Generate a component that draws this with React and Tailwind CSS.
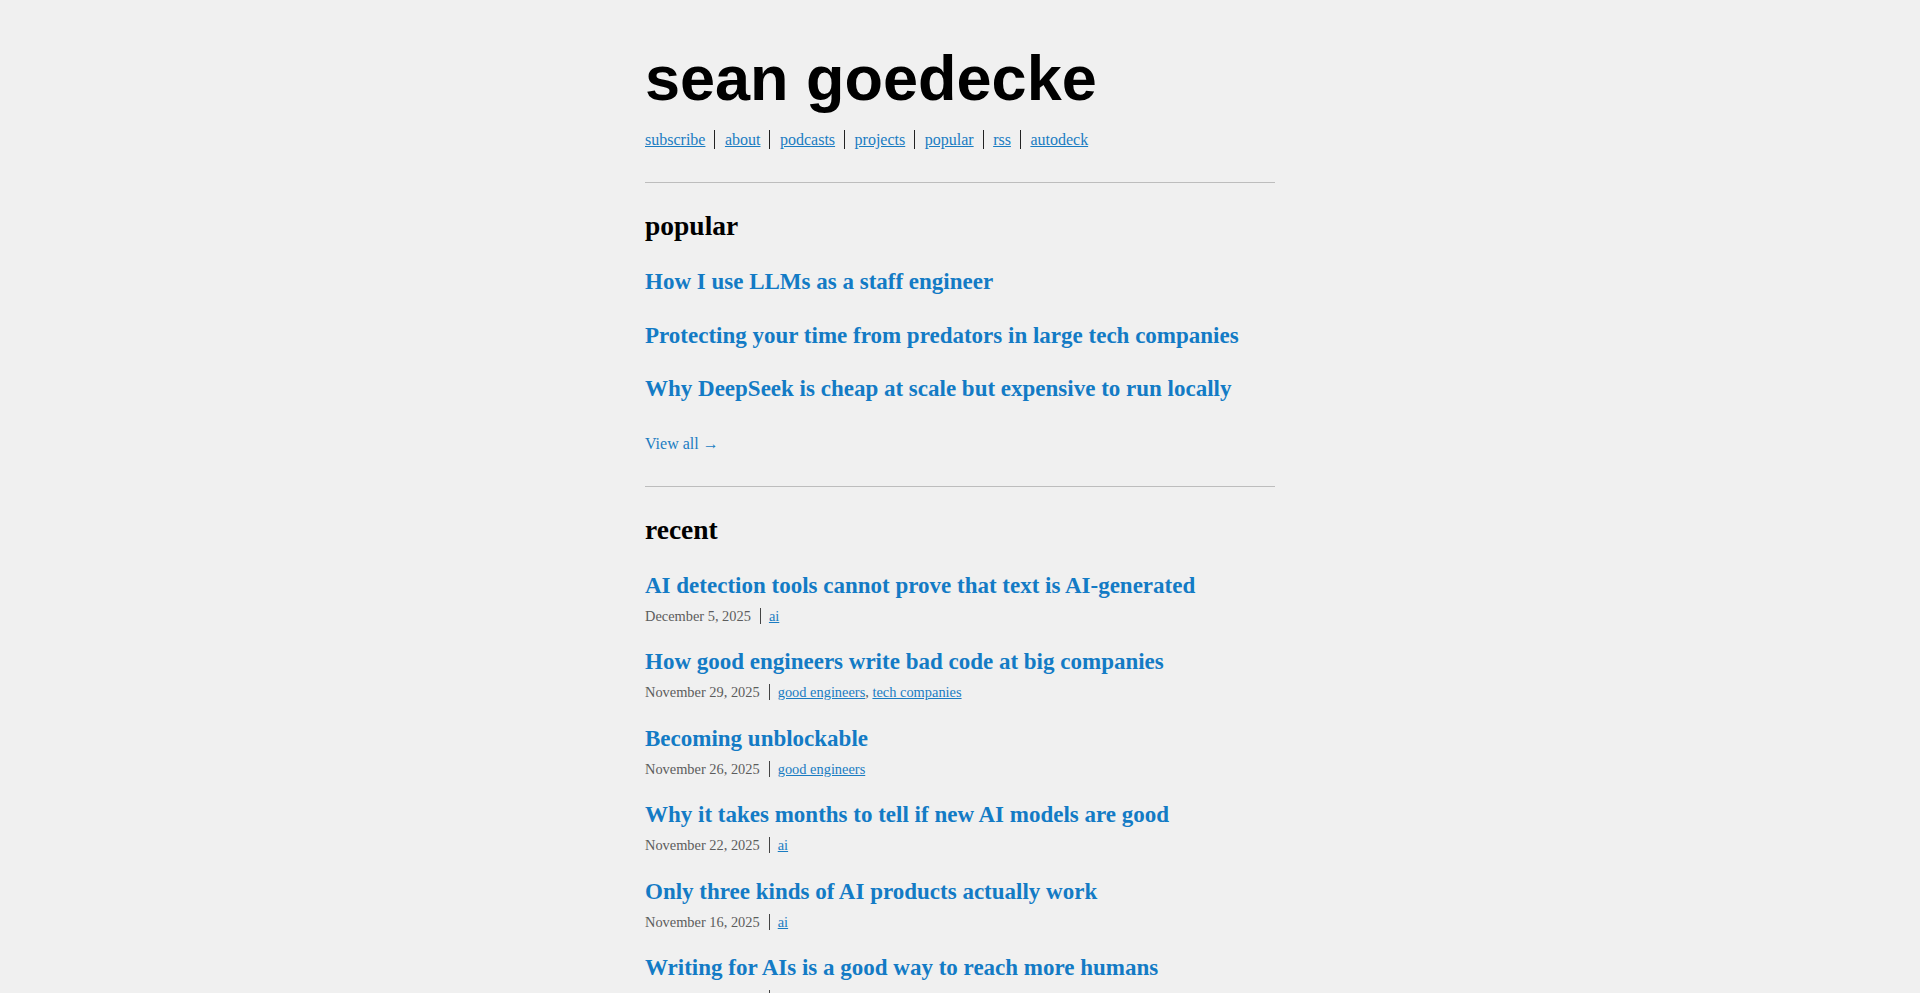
const navLinks = ['subscribe', 'about', 'podcasts', 'projects', 'popular', 'rss', 'autodeck'];

const popular = [
    'How I use LLMs as a staff engineer',
    'Protecting your time from predators in large tech companies',
    'Why DeepSeek is cheap at scale but expensive to run locally',
];

const recent = [
    { title: 'AI detection tools cannot prove that text is AI-generated', date: 'December 5, 2025', tags: ['ai'] },
    { title: 'How good engineers write bad code at big companies', date: 'November 29, 2025', tags: ['good engineers', 'tech companies'] },
    { title: 'Becoming unblockable', date: 'November 26, 2025', tags: ['good engineers'] },
    { title: 'Why it takes months to tell if new AI models are good', date: 'November 22, 2025', tags: ['ai'] },
    { title: 'Only three kinds of AI products actually work', date: 'November 16, 2025', tags: ['ai'] },
    { title: 'Writing for AIs is a good way to reach more humans', date: 'November 12, 2025', tags: ['ai', 'writing'] },
];

const PostTitle = ({ children }) => (
    <a href="#" className="block text-[23px] leading-[30px] font-bold text-[#137bc5] no-underline">
        {children}
    </a>
);

const Divider = () => <hr className="border-0 border-t border-[#bdbdbd] m-0" />;

export default function App() {
    return (
        <div className="min-h-screen bg-[#f0f0f0] text-black font-['Liberation_Serif','Times_New_Roman',serif]">
            <div className="mx-auto w-[630px] pt-[42px] pb-16">
                {/* Header */}
                <h1 className="m-0 text-[63px] leading-[72px] font-bold font-['Liberation_Sans',Arial,sans-serif]">
                    sean goedecke
                </h1>
                <nav className="mt-[14px] text-[16px] leading-[24px]">
                    {navLinks.map((link, i) => (
                        <span key={link} className={i > 0 ? 'ml-[9px] pl-[9.5px] py-[1px] border-l border-[#222]' : ''}>
                            <a href="#" className="text-[#1a7cc2] underline">{link}</a>
                        </span>
                    ))}
                </nav>

                <div className="mt-[30px]">
                    <Divider />
                </div>

                {/* Popular */}
                <h2 className="mt-[27px] m-0 text-[27.5px] leading-[32px] font-bold">popular</h2>
                <div className="mt-[25px] flex flex-col gap-[23.5px]">
                    {popular.map(title => (
                        <PostTitle key={title}>{title}</PostTitle>
                    ))}
                </div>
                <a href="#" className="block mt-[28px] text-[16px] leading-[24px] text-[#1a7cc2] no-underline">
                    View all →
                </a>

                <div className="mt-[30px]">
                    <Divider />
                </div>

                {/* Recent */}
                <h2 className="mt-[27px] m-0 text-[27.5px] leading-[32px] font-bold">recent</h2>
                <div className="mt-[24.5px] flex flex-col gap-[21.6px]">
                    {recent.map(post => (
                        <div key={post.title}>
                            <PostTitle>{post.title}</PostTitle>
                            <div className="mt-[5px] text-[14.4px] leading-[20px] text-[#5c5c5c]">
                                <span>{post.date}</span>
                                <span className="ml-[9px] pl-[8px] border-l border-[#444]">
                                    {post.tags.map((tag, i) => (
                                        <span key={tag}>
                                            {i > 0 && ', '}
                                            <a href="#" className="text-[#1a7cc2] underline">{tag}</a>
                                        </span>
                                    ))}
                                </span>
                            </div>
                        </div>
                    ))}
                </div>
            </div>
        </div>
    );
}
